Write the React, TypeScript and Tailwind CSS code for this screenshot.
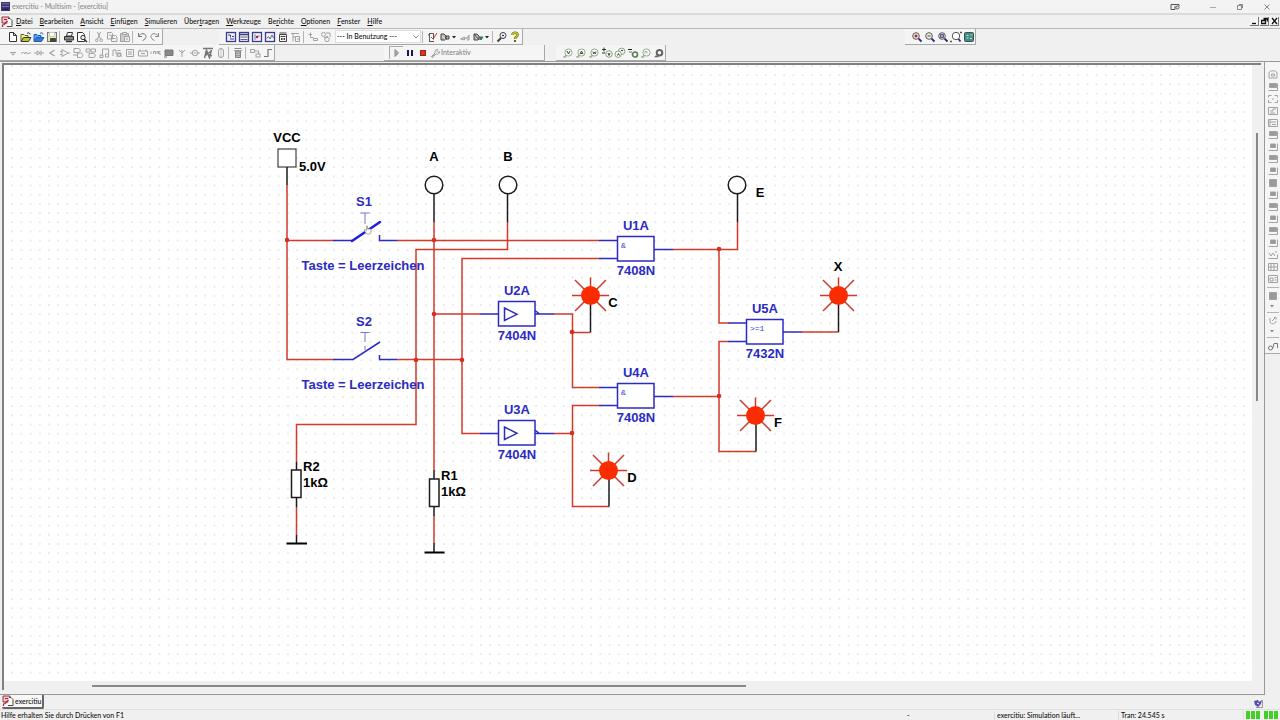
import React from 'react';

type IconProps = { children: React.ReactNode; color?: string };

const Icon: React.FC<IconProps> = ({ children, color = '#a2a2a2' }) => (
  <svg viewBox="0 0 12 12" className="h-3 w-3 shrink-0" fill="none" stroke={color} strokeWidth="1" aria-hidden="true">
    {children}
  </svg>
);

interface ToolProps {
  label: string;
  children: React.ReactNode;
}

const Tool: React.FC<ToolProps> = ({ label, children }) => (
  <button type="button" aria-label={label} className="flex h-3 w-[13px] shrink-0 items-center justify-center">
    {children}
  </button>
);

const Sep = () => <span className="mr-[2px] ml-px h-3 w-px shrink-0 bg-[#b4b4b4]" />;

const Caret: React.FC<{ color?: string }> = ({ color = '#222' }) => (
  <svg viewBox="0 0 6 12" className="mr-px h-3 w-[6px] shrink-0" aria-hidden="true">
    <path d="M1 5h4L3 7.5z" fill={color} />
  </svg>
);

const DocumentIcon = () => (
  <Icon color="#444">
    <path d="M1 1h7v6H1z" fill="#f7c6ca" stroke="#8f3540" />
    <path d="M7 2.500h2l2 2v6H6" fill="#fff" />
    <path d="M1.500 11V8.500M3 3.500h3M2.500 9l4-4" stroke="#b0202f" strokeWidth="1.200" />
  </Icon>
);

/* ---------- toolbar data ---------- */

type Entry = { label: string; icon: React.ReactNode } | null;

const blueWindow = (inner: React.ReactNode) => (
  <Icon color="#3c3c8c">
    <rect x="1.500" y="1.500" width="9" height="9" fill="#f2f2fa" strokeWidth="1.300" />
    {inner}
  </Icon>
);

const fileTools: Entry[] = [
  { label: 'Neu', icon: <Icon color="#333"><path d="M2.500 1.500h4l3 3v6h-7zM6.500 1.500v3h3" fill="#fff" /></Icon> },
  { label: 'Öffnen', icon: <Icon color="#5b6417"><path d="M1 10V3.500h3l1 1h3V6" fill="#f5f09a" /><path d="M1 10.500l2.500-4H11l-2.500 4z" fill="#c9c32b" stroke="#333" /><path d="M7 2.500c1.500-1.500 3-.5 3 1" stroke="#333" /></Icon> },
  { label: 'Muster öffnen', icon: <Icon color="#1f5eb8"><path d="M1 10V3.500h3l1 1h3V6" fill="#5fa4ee" /><path d="M1 10.500l2.500-4H11l-2.500 4z" fill="#2f7bdc" /><path d="M7 2.500c1.500-1.500 3-.5 3 1" /></Icon> },
  { label: 'Speichern', icon: <Icon color="#777"><rect x="1.500" y="1.500" width="9" height="9" fill="#e6eba4" /><path d="M3.500 1.500h5v4h-5z" fill="#fff" stroke="#ccc" /><path d="M4.500 10.500v-3h5v3z" fill="#444" stroke="#444" /></Icon> },
  null,
  { label: 'Drucken', icon: <Icon color="#333"><path d="M3.500 5l1-3.500h5L8.500 5z" fill="#fff" /><path d="M1.500 5.500h9v3.500h-9z" fill="#888" /><path d="M3 10.500h6" strokeWidth="1.500" /></Icon> },
  { label: 'Druckvorschau', icon: <Icon color="#333"><path d="M1.500 1.500h5l2 2v7h-7z" fill="#fff" /><circle cx="7" cy="6.500" r="2.200" fill="#ddeeee" /><path d="M8.500 8.500l2.500 2.500" strokeWidth="1.500" /></Icon> },
  null,
  { label: 'Ausschneiden', icon: <Icon><path d="M4.500 1l3 7M7.500 1l-3 7" /><circle cx="3.800" cy="9.300" r="1.300" /><circle cx="8.200" cy="9.300" r="1.300" /></Icon> },
  { label: 'Kopieren', icon: <Icon><path d="M1.500 1.500h4l1 1V8h-5z" /><path d="M5.500 4.500h4l1.500 1.500v4.500H5.500zM3 4h2M7 7.500h2.500" /></Icon> },
  { label: 'Einfügen', icon: <Icon><path d="M1.500 2.500h8v8h-8z" fill="#ccc" /><path d="M3.500 1.500h4v2h-4zM5.500 5.500h5v5h-5zM7 8h2" fill="#eee" /></Icon> },
  null,
  { label: 'Rückgängig', icon: <Icon color="#777"><path d="M2.500 2v3.500H6M2.500 5.500c2-4 7.500-3.500 7.500 0 0 2-1.500 3-3.500 4" /></Icon> },
  { label: 'Wiederholen', icon: <Icon color="#888"><path d="M9.500 2v3.500H6M9.500 5.500c-2-4-7.500-3.500-7.500 0 0 2 1.500 3 3.500 4" /></Icon> },
];

const viewTools: Entry[] = [
  { label: 'Entwurfsfenster', icon: blueWindow(<path d="M3 4h2.500v2.500M5 8h4M7 5.500h2" />) },
  { label: 'Tabellenansicht', icon: blueWindow(<><path d="M2 3.500h8" strokeWidth="1.500" /><path d="M2.500 6h7M2.500 8.500h7" stroke="#667" /></>) },
  { label: 'SPICE-Netzliste', icon: blueWindow(<><path d="M4 3v6M8 4v2" stroke="#889" /><circle cx="6" cy="6" r="1.300" fill="#b32626" stroke="none" /></>) },
  { label: 'Grapher', icon: blueWindow(<path d="M2.500 7.500l2-2 1.500 2.500L8 4l1.500 3" stroke="#667" />) },
  { label: 'Postprozessor', icon: <Icon color="#444"><path d="M2.500 3.500h7v7h-7zM2.500 2h7M3.500 5.500h5M4.500 7v2M6 7v2M7.500 7v2" /></Icon> },
  { label: 'Stammkomponente', icon: <Icon><path d="M1 2.500h8M3 2.500v8M5.500 5.500h4v5h-4zM3 6h2.500M7 8h3" /></Icon> },
  null,
  { label: 'Komponente', icon: <Icon><path d="M3.500 1.500v5h3M1.500 3.500h3.500M6.500 7.500h4v2h-4z" /></Icon> },
  { label: 'Datenbank', icon: <Icon><circle cx="3.500" cy="3.500" r="2" /><path d="M6 2h4v4M4 7l4-2" /><circle cx="7" cy="8.500" r="2.200" /></Icon> },
];

const placeTools: Entry[] = [
  { label: 'Quelle', icon: <Icon><path d="M3 5.500h6M4.500 7h3M6 7v1.500" /></Icon> },
  { label: 'Passiv', icon: <Icon><path d="M1 6h1.500l1-1L5 7l1.300-2 1.400 2L9 6h2" /></Icon> },
  { label: 'Diode', icon: <Icon><path d="M1 6h3M8 6h3M4 4v4l3.500-2zM8 3.500v5" /></Icon> },
  { label: 'Transistor', icon: <Icon><path d="M8.500 3L4 6l4.500 3" strokeWidth="1.300" /></Icon> },
  { label: 'Analog', icon: <Icon><path d="M3 2.500v7l6-3.500zM1 4.500h2M1 7.500h2M9 6h2" /></Icon> },
  { label: 'TTL', icon: <Icon><path d="M2 1.500h4c3 0 3 4 0 4H2zM5.500 6h3c3 0 3 4.500 0 4.500h-3zM1 8h4" /></Icon> },
  { label: 'CMOS', icon: <Icon><path d="M1 2h4v3H1zM6 2h4.500v3H6zM4 6.500h4c3 0 3 4 0 4H4z" /></Icon> },
  { label: 'Diverse Digital', icon: <Icon><path d="M4.500 2h6v5M4.500 2v7M2 8h3v2.500H2zM7.500 7h3v3h-3z" /></Icon> },
  { label: 'Gemischt', icon: <Icon><path d="M2 3v6M2 3h3v4M6 10V6h4v4M6.500 3.500h3" /><circle cx="8" cy="8" r="1.500" /></Icon> },
  { label: 'Anzeige', icon: <Icon><path d="M2.500 2.500h7v7h-7zM4 5h4M4 7h4" /></Icon> },
  { label: 'Leistung', icon: <Icon><path d="M1.500 4h9v5h-9zM3 4V2.500M9 4V2.500M4 6.500h4" /></Icon> },
  { label: 'Verschiedenes', icon: <Icon><path d="M1 4.500v2.500M3.500 7V4.500h2V7M7 7V4.500h1.500V7M10.500 4.500H9V7h2" /></Icon> },
  { label: 'Peripherie', icon: <Icon color="#777"><path d="M2 3h8v5.500H2z" fill="#888" /><path d="M1 10h3" /></Icon> },
  { label: 'HF', icon: <Icon><path d="M6 10V3M3 3l3 3 3-3" /></Icon> },
  { label: 'Elektromechanisch', icon: <Icon><circle cx="6" cy="6" r="2.800" /><path d="M1 6h2M9 6h2M4.500 6h3" /></Icon> },
  { label: 'NI', icon: <Icon color="#777"><path d="M1 1.500h10M2.500 11l2-8 3 8 2-8M3 5l7 4M3 9l6-5" strokeWidth="1.400" /></Icon> },
  { label: 'Stecker', icon: <Icon><rect x="3.500" y="1.500" width="5" height="9" rx="2.500" /><path d="M6 1v10" strokeWidth="0.600" /></Icon> },
  null,
  { label: 'MCU', icon: <Icon color="#888"><path d="M2.500 1.500h7M3.500 4h5v6.500h-5z" fill="#bbb" /><path d="M2 3.500h8M4 6h4M4 8.500h4" strokeWidth="0.700" /></Icon> },
  null,
  { label: 'Hierarchischer Block', icon: <Icon><path d="M1.500 2.500h4v3h-4zM5.500 4h4v3" /><rect x="7" y="7" width="4" height="3" /></Icon> },
  { label: 'Bus', icon: <Icon color="#777"><path d="M2 9.500h4v-7h4" strokeWidth="1.200" /></Icon> },
];

const bubble = (inner: React.ReactNode) => (
  <Icon color="#86a37f">
    <circle cx="6.500" cy="5.500" r="3.600" fill="#f7fbf5" strokeWidth="0.900" />
    <path d="M4 8.500L1.500 10h3" />
    {inner}
  </Icon>
);

const probeTools: Entry[] = [
  { label: 'Spannung', icon: bubble(<path d="M5 4l1.500 3L8 4" stroke="#444" />) },
  { label: 'Strom', icon: bubble(<path d="M5 7.200L6.500 4 8 7.200M5.500 6.500h2" stroke="#444" />) },
  { label: 'Leistungssonde', icon: bubble(<path d="M5 4.500l.7 2.500.8-2 .8 2 .7-2.500" stroke="#555" />) },
  { label: 'Differenz', icon: <Icon color="#86a37f"><path d="M1 2.500h4M3 .5v4M1 6h3" stroke="#333" /><circle cx="8" cy="7" r="3.300" /><path d="M7 6l1 2.500L9 6" stroke="#444" /></Icon> },
  { label: 'Spannung und Strom', icon: <Icon color="#86a37f"><circle cx="7.700" cy="4.300" r="3.200" /><circle cx="4.200" cy="7.200" r="3.200" fill="#f7fbf5" /><path d="M3.500 8.500l1-2 1 2M7 3.500h2" stroke="#444" /></Icon> },
  { label: 'Referenz', icon: <Icon color="#5c8350"><path d="M1 2.500h4" stroke="#222" /><circle cx="8" cy="7.500" r="2.500" strokeWidth="1.700" /><path d="M2 5h3" /></Icon> },
  { label: 'Digital', icon: bubble(<path d="M5 6.500V4.500h2V6.500" stroke="#aaa" />) },
  { label: 'Sondeneinstellungen', icon: <Icon color="#666"><circle cx="6.500" cy="5.700" r="2.800" strokeWidth="2" /><path d="M3.500 8.500L2.500 9.700h3" strokeWidth="1.200" /></Icon> },
];

const lens = (inner: React.ReactNode) => (
  <Icon color="#555">
    <circle cx="5" cy="5" r="3.300" fill="#f4efe6" />
    {inner}
    <path d="M7.600 7.600L10.500 10.500" stroke="#26266f" strokeWidth="1.800" />
  </Icon>
);

const zoomTools: Entry[] = [
  { label: 'Vergrößern', icon: lens(<path d="M3.500 5h3M5 3.500v3" stroke="#a02020" strokeWidth="1.400" />) },
  { label: 'Verkleinern', icon: lens(<path d="M3.500 5h3" stroke="#3f7740" strokeWidth="1.200" />) },
  { label: 'Bereich zoomen', icon: lens(<path d="M3.500 3.500h3v3h-3z" stroke="#55558c" fill="#aab" />) },
  { label: 'Blatt zoomen', icon: <Icon color="#555"><circle cx="6" cy="5" r="3.700" fill="#fff" /><path d="M8.500 8L10.500 10.500" stroke="#26266f" strokeWidth="1.800" /><path d="M0 10.500h2M10 1.500h2" strokeWidth="1.500" /></Icon> },
  { label: 'Vollbild', icon: <Icon color="#2c5c5a"><rect x="1.500" y="1.500" width="9" height="9" rx="1" fill="#4a8882" /><path d="M3.500 4.500h2M7.500 4h2M3.500 7h2M7 7.500h2" stroke="#bfe0d8" /></Icon> },
];

const ToolList: React.FC<{ items: Entry[] }> = ({ items }) => (
  <>
    {items.map((item, i) => (item ? <Tool key={i} label={item.label}>{item.icon}</Tool> : <Sep key={i} />))}
  </>
);

const Group: React.FC<{ label: string; className?: string; children: React.ReactNode }> = ({ label, className = '', children }) => (
  <div
    role="toolbar"
    aria-label={label}
    className={`flex h-4 shrink-0 items-center border-r border-b border-[#a8a8a8] bg-[#f5f5f5] ${className}`}
  >
    {children}
  </div>
);

/* ---------- header ---------- */

const menus: [string, string, string][] = [
  ['', 'D', 'atei'],
  ['', 'B', 'earbeiten'],
  ['', 'A', 'nsicht'],
  ['', 'E', 'infügen'],
  ['', 'S', 'imulieren'],
  ['Über', 't', 'ragen'],
  ['', 'W', 'erkzeuge'],
  ['Be', 'r', 'ichte'],
  ['', 'O', 'ptionen'],
  ['', 'F', 'enster'],
  ['', 'H', 'ilfe'],
];

const TitleBar = () => (
  <header className="flex h-[13px] shrink-0 items-center bg-[#f3f3f3] text-[#8b8b8b]">
    <svg viewBox="0 0 10 10" className="ml-px h-[9px] w-[9px]" aria-hidden="true">
      <rect width="10" height="10" fill="#3b3272" />
      <path d="M1 2h8M1 5h8" stroke="#8378b8" />
      <path d="M2 8h6" stroke="#20183f" />
    </svg>
    <h1 className="ml-[2px]">exercitiu - Multisim - [exercitiu]</h1>
    <div className="ml-auto flex items-center">
      <svg viewBox="0 0 10 8" className="mr-[19px] h-2 w-[10px]" fill="none" stroke="#555" aria-hidden="true">
        <path d="M5 6.500H1v-5h8v1.500M5 3v3.500" />
        <circle cx="7.500" cy="4.500" r="1.500" />
      </svg>
      <button type="button" aria-label="Minimieren" className="flex h-3 w-[27px] items-center justify-center">
        <svg viewBox="0 0 6 6" className="h-[6px] w-[6px]" stroke="#aaa"><path d="M0 3.500h6" /></svg>
      </button>
      <button type="button" aria-label="Verkleinern" className="flex h-3 w-[27px] items-center justify-center">
        <svg viewBox="0 0 6 6" className="h-[6px] w-[6px]" stroke="#888" fill="none"><path d="M.5 1.500h4v4h-4zM2 .5h3.500V4" /></svg>
      </button>
      <button type="button" aria-label="Schließen" className="flex h-3 w-[27px] items-center justify-center">
        <svg viewBox="0 0 6 6" className="h-[6px] w-[6px]" stroke="#888"><path d="M.5.5l5 5M5.500.5l-5 5" /></svg>
      </button>
    </div>
  </header>
);

const MenuBar = () => (
  <nav className="flex h-4 shrink-0 items-center border-t-2 border-b border-t-[#dadada] border-b-[#b8b8b8]">
    <span className="ml-px mr-[3px] flex"><DocumentIcon /></span>
    <div className="flex gap-[7px]">
      {menus.map(([pre, key, post]) => (
        <button key={post} type="button">
          {pre}<span className="underline">{key}</span>{post}
        </button>
      ))}
    </div>
    <div className="ml-auto flex gap-px pr-px">
      {['M1 6.500h4', 'M2.500 1.500h4v3M.5 3.500h4v3h-4zM2.500 2h4', 'M1 1l5 6M6 1L1 7'].map((d, i) => (
        <button
          key={d}
          type="button"
          aria-label={['Dokument minimieren', 'Dokument wiederherstellen', 'Dokument schließen'][i]}
          className="flex h-[9px] w-[9px] items-center justify-center border-r border-b border-[#777] bg-[#f4f4f4]"
        >
          <svg viewBox="0 0 7 8" className="h-2 w-[7px]" stroke="#111" strokeWidth="1.300" fill="none"><path d={d} /></svg>
        </button>
      ))}
    </div>
  </nav>
);

const Toolbars = () => (
  <div className="flex shrink-0 flex-col border-b border-[#999]">
    <div className="flex h-4">
      <Group label="Standard" className="pr-px pl-[6px]">
        <ToolList items={fileTools} />
      </Group>
      <Group label="Hauptleiste" className="ml-[56px] pr-px pl-[5px]">
        <ToolList items={viewTools} />
        <select aria-label="Verwendete Komponenten" className="ml-[3px] h-[13px] w-[86px] appearance-none border border-[#ddd] bg-white px-px leading-none">
          <option>--- In Benutzung ---</option>
        </select>
        <svg viewBox="0 0 6 4" className="pointer-events-none -ml-2 mr-[2px] h-1 w-[6px] shrink-0" fill="none" stroke="#888" aria-hidden="true"><path d="M.5.5L3 3 5.500.5" /></svg>
        <Sep />
        <Tool label="ERC"><Icon color="#555"><path d="M3.500 2v8M3.500 2.500h4v6M3 10.500h5M2 4h1.500" /><path d="M5 6l2 2 4-6" stroke="#c33" /></Icon></Tool>
        <Tool label="Übertragen"><Icon color="#444"><path d="M2 3v6h4M2 3h3l2 2v4M7 5h3v3H7z" fill="#bbb" /></Icon></Tool>
        <Caret />
        <Tool label="Rückwärts"><Icon><path d="M1.500 8l4-2v3zM6 7h2l2-3v5H8" fill="#ccc" /></Icon></Tool>
        <Tool label="Vorwärts"><Icon color="#444"><path d="M2 3v6h4M2 3h3l2 2v4z" fill="#bbb" /><path d="M7 6h4L9 9z" fill="#2b7a6b" stroke="#2b7a6b" /></Icon></Tool>
        <Caret />
        <Sep />
        <Tool label="Beispiele suchen"><Icon color="#444"><circle cx="7" cy="4.500" r="3" fill="#e4eeee" /><path d="M5 7l-3.500 3.500" strokeWidth="2" /><path d="M6 4.500h2" stroke="#26267f" /></Icon></Tool>
        <Tool label="Hilfe"><Icon color="#66661f"><path d="M3.500 4c0-3 5-3 5 0 0 2-2.500 1.500-2.500 4" strokeWidth="2.600" /><path d="M3.500 4c0-3 5-3 5 0 0 2-2.500 1.500-2.500 4" stroke="#c9c327" strokeWidth="1.400" /><path d="M5 10h2" strokeWidth="2" /></Icon></Tool>
      </Group>
      <Group label="Zoom" className="mr-[304px] ml-auto pl-[5px]">
        <ToolList items={zoomTools} />
      </Group>
    </div>
    <div className="flex h-4">
      <Group label="Komponenten" className="pl-[6px]">
        <ToolList items={placeTools} />
      </Group>
      <Group label="Simulation" className="ml-[109px] w-[161px] pl-[5px]">
        <span className="border-t border-l border-[#aaa]">
          <Tool label="Starten"><Icon color="#888"><path d="M4 2.500v7L7.500 6z" fill="#aaa" /></Icon></Tool>
        </span>
        <Tool label="Anhalten"><Icon color="#17174f"><path d="M4 3v6M8 3v6" strokeWidth="2" /></Icon></Tool>
        <Tool label="Stoppen"><Icon color="#8f2a12"><rect x="3.500" y="3.500" width="5" height="5" fill="#e3301a" /></Icon></Tool>
        <button type="button" className="flex items-center text-[#858585]">
          <Icon><path d="M2 10l4-4M6 6c-.5-2.500 1-4 3-3.500L7.500 4 9 5.500l1.500-1C11 6.500 8.500 8 7 7l-4 4z" /></Icon>
          Interaktiv
        </button>
      </Group>
      <Group label="Sonden" className="ml-[11px] pl-[5px]">
        <ToolList items={probeTools} />
      </Group>
    </div>
  </div>
);

/* ---------- schematic ---------- */

const RED = '#d33a2b';
const BLUE = '#2b2bc4';
const BLACK = '#1c1c1c';

const wires = [
  'M287 185V359.500H333 M287 240.500H333',
  'M397 240.500H599 M397 359.500H462',
  'M434 222V470 M434 314H480 M434 516V543',
  'M507.500 222V249.500H416V424.500H296.500V462 M296.500 507V535',
  'M599 258.500H462V433.500H480',
  'M554 314H572.500V387.500H599 M572.500 332.500H590',
  'M554 433.500H572.500 M599 405.500H572.500V506.500H609',
  'M673 249.500H737.500V222 M719 249.500V323H728',
  'M728 341.500H719V451.500H756 M673 396.500H719',
  'M802 332H838.500',
];

const pins = [
  'M333 240.500H352 M379.500 235V240.500H397',
  'M333 359.500H353L380 342 M379.500 355V359.500H397',
  'M480 314H498 M535 314H554 M535 310.500L539.500 314',
  'M480 433.500H498 M535 433.500H554 M535 430L539.500 433.500',
  'M599 240.500H617 M599 258.500H617 M654 249.500H673',
  'M599 387.500H617 M599 405.500H617 M654 396.500H673',
  'M728 323H746 M728 341.500H746 M783 332H802',
];

const leads = [
  'M287 167V185 M434 194V222 M507.500 194V222 M737.500 194V222',
  'M434 470V479 M434 506V516 M434 543V552',
  'M296.500 462V470 M296.500 497V507 M296.500 535V543',
  'M590.500 304V332.500 M609 479V506.500 M756 424V451.500 M838.500 304V332',
];

const junctions = [
  [287, 240], [434, 240], [434, 314], [416, 360], [462, 360], [572, 332],
  [572, 433], [719, 249], [719, 396],
];

const lamps = [
  { name: 'C', x: 590, y: 295, lx: 613, ly: 307 },
  { name: 'D', x: 608, y: 470, lx: 632, ly: 482 },
  { name: 'F', x: 755, y: 415, lx: 778, ly: 427 },
  { name: 'X', x: 838, y: 295, lx: 838, ly: 271 },
];

const probes = [
  { name: 'A', x: 434, lx: 434, ly: 161 },
  { name: 'B', x: 508, lx: 508, ly: 161 },
  { name: 'E', x: 737, lx: 760, ly: 197 },
];

const gates = [
  { name: 'U1A', type: '7408N', x: 617, y: 237, kind: 'and' },
  { name: 'U2A', type: '7404N', x: 498, y: 302, kind: 'not' },
  { name: 'U3A', type: '7404N', x: 498, y: 421, kind: 'not' },
  { name: 'U4A', type: '7408N', x: 617, y: 384, kind: 'and' },
  { name: 'U5A', type: '7432N', x: 746, y: 320, kind: 'or' },
];

const Schematic = () => (
  <svg
    role="img"
    aria-label="Schaltplan exercitiu"
    className="block h-full w-full bg-white font-['Liberation_Sans',Arial,sans-serif] text-[13px] font-bold"
    fill="none"
    strokeWidth="1.500"
  >
    <defs>
      <pattern id="grid" x="3.600" y="5.600" width="9.190" height="9.190" patternUnits="userSpaceOnUse">
        <rect x="4" y="4" width="1.300" height="1.300" fill="#d2d2d2" />
      </pattern>
    </defs>
    <rect width="100%" height="100%" fill="url(#grid)" />
    <g transform="translate(-4 -65)">
      <path d={wires.join(' ')} stroke={RED} />
      <path d={pins.join(' ')} stroke={BLUE} />
      <path d={leads.join(' ')} stroke={BLACK} />
      {junctions.map(([x, y]) => (
        <circle key={`${x}-${y}`} cx={x} cy={y} r="2.300" fill="#dc2d1c" />
      ))}

      {/* supply, resistors and ground */}
      <rect x="278" y="149" width="18" height="18" fill="#fff" stroke={BLACK} strokeWidth="1" />
      <rect x="291.500" y="470" width="9.500" height="27.500" fill="#fff" stroke={BLACK} />
      <rect x="429.500" y="479" width="9.500" height="27.500" fill="#fff" stroke={BLACK} />
      <path d="M286.500 543.500H307 M424.500 552.500H444.500" stroke="#000" strokeWidth="2.200" />

      {/* switches */}
      <path d="M352 241L380 222" stroke="#1f1fdd" strokeWidth="2.600" strokeLinecap="round" />
      <path d="M360.500 213H369.500 M365 213V224 M360.500 332.500H369.500 M365 332.500V342 M365 346V350" stroke="#7777c8" strokeWidth="1" />
      <path d="M366 233l-2-3 1-.5 1.500 1V226h1v3h3.500v3l-1 2h-3z" fill="#fff" stroke="#888" strokeWidth="0.700" />

      {probes.map((p) => (
        <circle key={p.name} cx={p.x} cy="185" r="8.800" fill="#fff" stroke={BLACK} />
      ))}

      {lamps.map((l) => (
        <g key={l.name} transform={`translate(${l.x} ${l.y})`}>
          <path
            d="M-18 .5H19M.5-17.500V0M-15-15L16 16M16-15L-15 16"
            stroke="#d0392b"
          />
          <circle cx="0.500" cy="0.500" r="9.500" fill="#fb2c02" />
        </g>
      ))}

      {gates.map((g) => (
        <g key={g.name}>
          <rect x={g.x + 0.5} y={g.y - 0.5} width="36.500" height="24.500" fill="#fff" stroke={BLUE} />
          {g.kind === 'not' && <path d={`M${g.x + 6.5} ${g.y + 6}v12.500l12.500-6.200z`} stroke={BLUE} />}
          {g.kind !== 'not' && (
            <text x={g.x + 4} y={g.y + 11} fill="#3b3bcb" className="font-['Liberation_Mono',monospace] text-[8px] font-normal">
              {g.kind === 'and' ? '&' : '>=1'}
            </text>
          )}
        </g>
      ))}

      <g fill={BLUE} textAnchor="middle">
        {gates.map((g) => (
          <React.Fragment key={g.name}>
            <text x={g.x + 19} y={g.y - 7}>{g.name}</text>
            <text x={g.x + 19} y={g.y + 38}>{g.type}</text>
          </React.Fragment>
        ))}
        <text x="364" y="206">S1</text>
        <text x="364" y="326">S2</text>
        <text x="363" y="270">Taste = Leerzeichen</text>
        <text x="363" y="389">Taste = Leerzeichen</text>
      </g>
      <g fill="#000" textAnchor="middle">
        {[...probes, ...lamps].map((p) => (
          <text key={p.name} x={p.lx} y={p.ly}>{p.name}</text>
        ))}
        <text x="287" y="142">VCC</text>
      </g>
      <g fill="#000">
        <text x="299" y="171">5.0V</text>
        <text x="303" y="471">R2</text>
        <text x="303" y="487">1kΩ</text>
        <text x="441" y="480">R1</text>
        <text x="441" y="496">1kΩ</text>
      </g>
    </g>
  </svg>
);

/* ---------- instruments ---------- */

const instruments = [
  'Multimeter', 'Funktionsgenerator', 'Wattmeter', 'Oszilloskop', 'Vierkanal-Oszilloskop', 'Bode-Plotter',
  'Frequenzzähler', 'Wortgenerator', 'Logikkonverter', 'Logikanalysator', 'Kennlinienschreiber', 'Klirranalysator',
  'Spektrumanalysator', 'Netzwerkanalysator', 'Agilent-Generator', 'Agilent-Multimeter', 'Agilent-Oszilloskop',
  'Tektronix-Oszilloskop',
];

const outlineArt: Record<number, string> = {
  0: 'M2 9V4c0-3 8-3 8 0v5zM4.500 5h3v2h-3z',
  2: 'M4.500 2.500h-3v2M7.500 2.500h3v2M1.500 7v2.500h3M10.500 7v2.500h-3M5 6h2',
  3: 'M1.500 2.500h9v7h-9zM3 6h3V4h3M3 8h5',
  4: 'M1.500 2.500h9v7h-9zM3 2v8M3 5h6M5 7.500h4',
  15: 'M1.500 9.500h9v-4M2 4l2 3 2-3 2 3M8 3h2',
  16: 'M1.500 2.500h9v7h-9zM4 3v6M7 3v6M2 6h8',
  17: 'M1.500 2.500h9v7h-9zM3 5h3v3H3zM7.500 4.500h2M7.500 7h2',
};

const InstrumentBar = () => (
  <aside aria-label="Instrumente" className="flex w-[15px] shrink-0 flex-col items-center self-start border-b border-[#aaa] bg-[#f5f5f5] pt-[7px] pb-px">
    {instruments.map((name, i) => (
      <Tool key={name} label={name}>
        <Icon>
          {outlineArt[i] ? (
            <path d={outlineArt[i]} />
          ) : (
            <>
              <path d={i === 9 ? 'M2.500 2.500h7v7h-7z' : i % 2 ? 'M2.500 2.500h7v4h-7z' : 'M3.500 3h5v3.500h-5z'} fill="#9a9a9a" />
              {i !== 9 && <path d="M1.500 9.500h9V2.500" />}
            </>
          )}
        </Icon>
      </Tool>
    ))}
    <span className="my-[2px] h-px w-3 bg-[#b4b4b4]" />
    <Tool label="LabVIEW"><Icon><path d="M2.500 2.500h7v7h-7z" fill="#999" /></Icon></Tool>
    <span className="flex h-2 items-center"><Caret color="#888" /></span>
    <span className="my-[2px] h-px w-3 bg-[#b4b4b4]" />
    <Tool label="ELVIS"><Icon><path d="M3 3v4c1 3 6 2 6-1M5 6l3-3M7 2.500h2v2" /></Icon></Tool>
    <span className="flex h-2 items-center"><Caret color="#888" /></span>
    <span className="my-[2px] h-px w-3 bg-[#b4b4b4]" />
    <Tool label="Stromzange"><Icon color="#777"><circle cx="3.500" cy="8" r="2" /><path d="M5.500 9L7 3.500h3.500V8" /></Icon></Tool>
  </aside>
);

/* ---------- footer ---------- */

const Meter = () => (
  <span className="flex gap-px">
    {[0, 1, 2].map((i) => (
      <span key={i} className="h-2 w-1 bg-[#43cf27]" />
    ))}
  </span>
);

const Footer = () => (
  <footer className="shrink-0">
    <div className="flex h-[14px] items-start">
      <a href="#exercitiu" className="ml-[2px] flex h-[14px] items-center gap-px rounded-b-[2px] border-r-2 border-b-2 border-[#666] bg-[#f7f7f7]">
        <DocumentIcon />
        exercitiu
      </a>
      <svg viewBox="0 0 9 9" className="mt-1 mr-[17px] ml-auto h-[9px] w-[9px]" aria-hidden="true">
        <path d="M0 2l4-1 1 2 3-2-1 4-3 3-3-2z" fill="#524fae" />
        <path d="M3 4l2 1" stroke="#fff" />
        <path d="M8.500 1v7.500H2" fill="none" stroke="#999" />
      </svg>
    </div>
    <div className="flex h-[11px] items-center border-t border-[#e0e0e0]">
      <span className="flex-1 pl-px">Hilfe erhalten Sie durch Drücken von F1</span>
      <span className="w-[87px]">-</span>
      <span className="w-[124px] border-l border-[#dcdcdc] pl-[2px]">exercitiu: Simulation läuft...</span>
      <span className="w-[125px] border-l border-[#dcdcdc] pl-[2px]">Tran: 24.545 s</span>
      <span className="flex w-[37px] justify-between border-l border-[#dcdcdc] px-[2px]">
        <Meter />
        <Meter />
      </span>
    </div>
  </footer>
);

const App = () => (
  <div className="flex h-screen flex-col overflow-hidden bg-[#f0f0f0] font-[Lato,'Open_Sans',sans-serif] text-[7px] leading-[9px] font-medium whitespace-nowrap text-[#111]">
    <TitleBar />
    <MenuBar />
    <Toolbars />
    <div className="flex min-h-0 flex-1">
      <main className="flex min-w-0 flex-1 flex-col border-r border-b border-[#999] pt-px pr-[3px] pb-1 pl-[2px]">
        <div className="flex min-h-0 flex-1 flex-col border-t-2 border-l-2 border-[#808080]">
          <div className="flex min-h-0 flex-1">
            <div className="min-w-0 flex-1">
              <Schematic />
            </div>
            <div className="flex w-[9px] flex-col items-center">
              <span className="mt-[68px] h-[268px] w-[2px] bg-[#888]" />
            </div>
          </div>
          <div className="flex h-[9px] items-center">
            <span className="ml-[7%] h-[2px] w-[52%] bg-[#888]" />
          </div>
        </div>
      </main>
      <InstrumentBar />
    </div>
    <Footer />
  </div>
);

export default App;
